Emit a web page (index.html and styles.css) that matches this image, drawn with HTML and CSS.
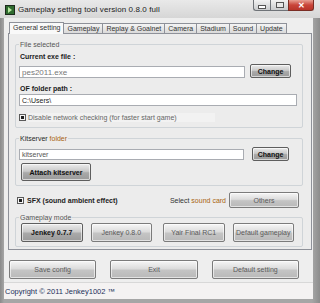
FILE: index.html
```html
<!DOCTYPE html>
<html lang="en">
<head>
    <meta charset="UTF-8">
    <title>Gameplay setting tool</title>
    <link rel="stylesheet" href="styles.css">
</head>
<body>
<div class="window">
    <div class="titlebar">
        <svg class="appicon" width="10" height="10" viewBox="0 0 10 10">
            <rect x="0" y="0" width="10" height="10" fill="#1d2b1d"/>
            <rect x="1" y="1" width="8" height="8" fill="#2f6b2f"/>
            <path d="M3 2 L7 5 L3 8 Z" fill="#b8e8a0"/>
        </svg>
        <span class="title">Gameplay setting tool version 0.8.0 full</span>
        <div class="controls">
            <span class="ctl min"><i></i></span>
            <span class="ctl max"><i></i></span>
            <span class="ctl close">&#x2715;</span>
        </div>
    </div>

    <div class="client">
        <div class="tabs">
            <span class="tab active">General setting</span>
            <span class="tab">Gameplay</span>
            <span class="tab">Replay &amp; Goalnet</span>
            <span class="tab">Camera</span>
            <span class="tab">Stadium</span>
            <span class="tab">Sound</span>
            <span class="tab">Update</span>
        </div>

        <div class="panel">
            <div class="group group-file">
                <span class="legend">File selected</span>
                <div class="label lbl-exe">Current exe file :</div>
                <div class="row row-exe">
                    <div class="input input-exe">pes2011.exe</div>
                    <button class="btn dark btn-change">Change</button>
                </div>
                <div class="label lbl-of">OF folder path :</div>
                <div class="input input-of">C:\Users\</div>
                <div class="check-row">
                    <span class="check"><i></i></span>
                    <span class="check-text">Disable network checking (for faster start game)</span>
                </div>
            </div>

            <div class="group group-kit">
                <span class="legend dark-legend">Kitserver <span class="accent">folder</span></span>
                <div class="row row-kit">
                    <div class="input input-kit">kitserver</div>
                    <button class="btn dark btn-change2">Change</button>
                </div>
                <button class="btn dark btn-attach">Attach kitserver</button>
            </div>

            <div class="sfx-row">
                <span class="check"><i></i></span>
                <span class="sfx-text">SFX (sound ambient effect)</span>
                <span class="sound-text">Select <span class="accent">sound card</span></span>
                <button class="btn btn-others">Others</button>
            </div>

            <div class="group group-mode">
                <span class="legend">Gameplay mode</span>
                <div class="mode-row">
                    <button class="btn dark btn-mode">Jenkey 0.7.7</button>
                    <button class="btn btn-mode">Jenkey 0.8.0</button>
                    <button class="btn btn-mode wide-gap">Yair Final RC1</button>
                    <button class="btn btn-mode">Default gameplay</button>
                </div>
            </div>
        </div>

        <div class="bottom-row">
            <button class="btn btn-bottom">Save config</button>
            <button class="btn btn-bottom">Exit</button>
            <button class="btn btn-bottom">Default setting</button>
        </div>

        <div class="copyright">Copyright &copy; 2011 Jenkey1002 &trade;</div>
    </div>
</div>
</body>
</html>
```

FILE: styles.css
```css
html, body {
    margin: 0;
    padding: 0;
    background: #9d9d9d;
    font-family: "Liberation Sans", Arial, sans-serif;
    font-size: 7px;
    color: #1a1a1a;
}

.window {
    width: 320px;
    height: 303px;
    box-sizing: border-box;
    background: linear-gradient(to right, #8a8a8a, #a6a6a6 4px, #a6a6a6 312px, #8c8c8c);
    display: flex;
    flex-direction: column;
    overflow: hidden;
}

/* title bar */
.titlebar {
    height: 18px;
    flex: none;
    display: flex;
    align-items: center;
    background: linear-gradient(#e9e9e9, #d6d6d6);
    position: relative;
}
.appicon {
    margin-left: 5px;
    margin-top: 1px;
}
.title {
    margin-left: 3px;
    font-size: 8px;
    color: #222;
    letter-spacing: 0.1px;
}
.controls {
    position: absolute;
    top: 0;
    left: 253px;
    display: flex;
}
.ctl {
    height: 11px;
    box-sizing: border-box;
    border: 1px solid #6f7378;
    border-top: none;
    display: flex;
    align-items: center;
    justify-content: center;
    background: linear-gradient(#f2f2f2, #c9cbcd);
}
.ctl.min {
    width: 17px;
    border-radius: 0 0 0 3px;
    border-right: none;
}
.ctl.min i {
    width: 6px;
    height: 2px;
    margin-top: 4px;
    background: #fff;
    border: 1px solid #555;
}
.ctl.max {
    width: 18px;
    border-right: none;
}
.ctl.max i {
    width: 6px;
    height: 4px;
    border: 1px solid #555;
    background: #e8e8e8;
}
.ctl.close {
    width: 26px;
    border-radius: 0 0 3px 0;
    border-color: #7a2d24;
    background: linear-gradient(#e8a093, #c9453a 50%, #b8352a);
    color: #fff;
    font-size: 8px;
    font-weight: bold;
}

/* client area */
.client {
    flex: 1;
    margin: 0 7px 4px 4px;
    background: #eeeeee;
    display: flex;
    flex-direction: column;
}

.tabs {
    display: flex;
    align-items: flex-end;
    margin-top: 4px;
    padding-left: 5px;
    height: 11px;
    position: relative;
    z-index: 1;
}
.tab {
    height: 9px;
    line-height: 9px;
    padding: 0 3px;
    border: 1px solid #8e9199;
    border-bottom: none;
    margin-right: -1px;
    background: linear-gradient(#f4f4f4, #dadada);
    color: #333;
    white-space: nowrap;
}
.tab.active {
    height: 11px;
    line-height: 10px;
    margin-bottom: -1px;
    background: #f9f9f9;
    position: relative;
    z-index: 2;
}

.panel {
    margin: 0 1px 0 4px;
    border: 1px solid #8e9199;
    background: #ececec;
    padding: 0 8px 2px 6px;
    display: flex;
    flex-direction: column;
}

/* group boxes */
.group {
    position: relative;
    border: 1px solid #cfd4d8;
    border-radius: 2px;
    padding: 0 3px;
}
.legend {
    position: absolute;
    top: -5px;
    left: 3px;
    padding: 0 1px;
    line-height: 9px;
    background: #ececec;
    color: #555;
}
.dark-legend {
    color: #2a2a2a;
}
.accent {
    color: #a8620e;
}

.group-file {
    margin-top: 10px;
    padding-bottom: 6px;
}
.label {
    font-weight: bold;
    line-height: 9px;
    padding-left: 1px;
}
.lbl-exe {
    margin-top: 7px;
}
.lbl-of {
    margin-top: 6px;
}
.row {
    display: flex;
    align-items: center;
}
.row-exe {
    margin-top: 3px;
    height: 14px;
}
.input {
    box-sizing: border-box;
    background: #fff;
    border: 1px solid #a9acb2;
    padding-left: 2px;
    display: flex;
    align-items: center;
}
.input-exe {
    width: 226px;
    height: 12px;
    margin-top: 2px;
    font-size: 8px;
    color: #777;
}
.input-of {
    width: 278px;
    height: 12px;
    margin-top: 1px;
    color: #222;
}
.check-row {
    margin-top: 7px;
    height: 8px;
    display: flex;
    align-items: center;
}
.check {
    width: 7px;
    height: 7px;
    box-sizing: border-box;
    border: 1px solid #5a5a5a;
    background: #f4f4f4;
    display: flex;
    align-items: center;
    justify-content: center;
    flex: none;
}
.check i {
    width: 3px;
    height: 3px;
    background: #1e1e1e;
}
.check-text {
    margin-left: 2px;
    width: 187px;
    line-height: 9px;
    color: #666;
    background: #f2f2f2;
}

.group-kit {
    margin-top: 10px;
    padding-bottom: 4px;
}
.row-kit {
    margin-top: 8px;
    height: 14px;
}
.input-kit {
    width: 225px;
    height: 11px;
    color: #555;
}

/* buttons */
.btn {
    font-family: "Liberation Sans", Arial, sans-serif;
    font-size: 7px;
    padding: 0;
    box-sizing: border-box;
    border: 1px solid #7b7b7b;
    border-radius: 2px;
    background: linear-gradient(#f6f6f6, #dcdcdc 45%, #c4c4c4 55%, #b9b9b9);
    color: #5a5a5a;
    box-shadow: inset 0 0 0 1px rgba(255, 255, 255, 0.6);
}
.btn.dark {
    font-weight: bold;
    color: #111;
    background: linear-gradient(#ececec, #c9c9c9 45%, #a9a9a9 55%, #9a9a9a);
    border-color: #5e5e5e;
}
.btn-change {
    width: 41px;
    height: 14px;
    margin-left: 5px;
}
.btn-change2 {
    width: 37px;
    height: 14px;
    margin-left: 8px;
}
.btn-attach {
    width: 70px;
    height: 18px;
    margin-top: 2px;
    margin-left: 2px;
}

.sfx-row {
    margin-top: 6px;
    height: 16px;
    display: flex;
    align-items: center;
    padding-left: 2px;
}
.sfx-text {
    margin-left: 3px;
    font-weight: bold;
    color: #222;
}
.sound-text {
    margin-left: auto;
    color: #333;
}
.btn-others {
    width: 70px;
    height: 16px;
    margin-left: 3px;
    margin-right: 4px;
}

.group-mode {
    margin-top: 9px;
    padding: 0 0 4px 5px;
}
.mode-row {
    display: flex;
    margin-top: 5px;
}
.btn-mode {
    width: 62px;
    height: 19px;
    margin-right: 8px;
}
.btn-mode.wide-gap {
    margin-left: 3px;
}

.bottom-row {
    display: flex;
    margin-top: 10px;
    padding-left: 5px;
}
.btn-bottom {
    width: 89px;
    height: 19px;
    margin-right: 14px;
}

.copyright {
    margin-top: auto;
    height: 16px;
    border-top: 1px solid #d8d8d8;
    background: #f4f2f2;
    display: flex;
    align-items: center;
    padding-left: 1px;
    font-size: 7.5px;
    color: #23305a;
}
```
